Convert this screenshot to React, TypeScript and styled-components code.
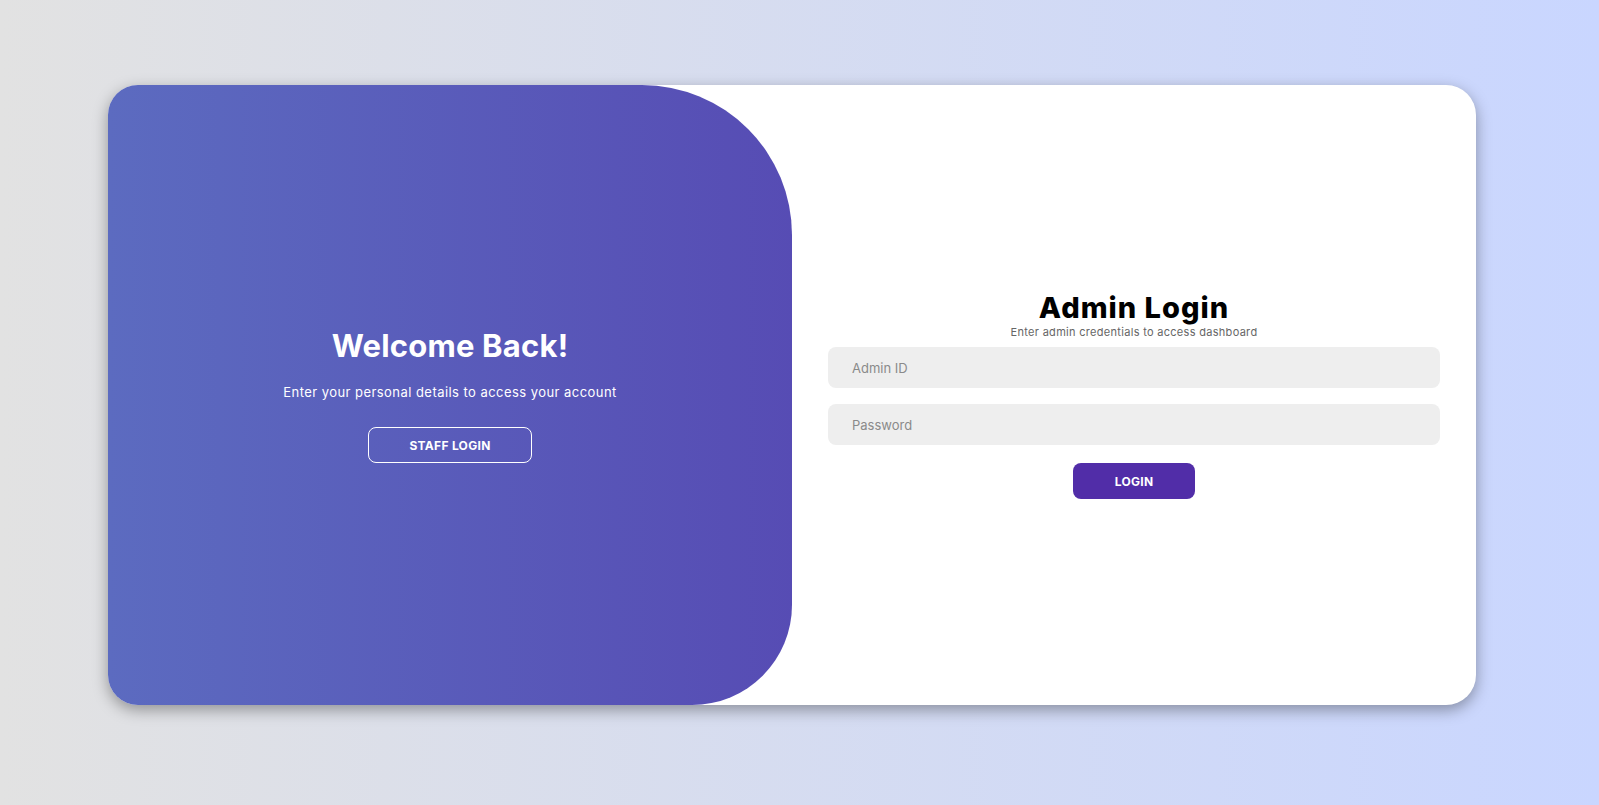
import React from "react";
import styled, { createGlobalStyle } from "styled-components";

const GlobalStyle = createGlobalStyle`
  * {
    box-sizing: border-box;
  }
  html, body {
    margin: 0;
    padding: 0;
  }
  body {
    font-family: Inter, "Open Sans", sans-serif;
    background: linear-gradient(to right, #e2e2e2, #c9d6ff);
  }
`;

const Page = styled.div`
  width: 100%;
  height: 100vh;
  /* the original shot reserved room for scrollbars */
  padding: 0 15px 15px 0;
  display: flex;
  align-items: center;
  justify-content: center;
  background: linear-gradient(to right, #e2e2e2, #c9d6ff);
`;

const Card = styled.div`
  width: 1368px;
  height: 620px;
  background-color: #fff;
  border-radius: 30px;
  box-shadow: 0 5px 15px rgba(0, 0, 0, 0.35);
  overflow: hidden;
  display: grid;
  grid-template-columns: 1fr 1fr;
`;

const TogglePanel = styled.div`
  background: linear-gradient(to right, #5c6bc0, #512da8);
  background-size: 200% 100%;
  background-position: left center;
  border-radius: 0 150px 100px 0;
  color: #fff;
  display: flex;
  flex-direction: column;
  align-items: center;
  justify-content: center;
  text-align: center;
  padding: 0 30px;
`;

const WelcomeTitle = styled.h1`
  margin: 0;
  font-size: 31px;
  line-height: 38px;
  font-weight: 700;
  letter-spacing: 0.2px;
`;

const WelcomeText = styled.p`
  margin: 17px 0 25px;
  font-size: 13px;
  line-height: 20px;
  letter-spacing: 0.45px;
`;

const Button = styled.button<{ $ghost?: boolean }>`
  font-family: inherit;
  font-size: 12px;
  font-weight: 700;
  letter-spacing: 0.3px;
  text-transform: uppercase;
  color: #fff;
  height: 36px;
  padding: 0 ${(p) => (p.$ghost ? 40 : 41)}px;
  border-radius: 8px;
  cursor: pointer;
  background-color: ${(p) => (p.$ghost ? "transparent" : "#512da8")};
  border: 1px solid ${(p) => (p.$ghost ? "#fff" : "transparent")};
`;

const FormSide = styled.div`
  display: flex;
  align-items: center;
  justify-content: center;
  padding: 0 36px;
`;

const Form = styled.form`
  width: 100%;
  display: flex;
  flex-direction: column;
  align-items: center;
`;

const FormTitle = styled.h1`
  margin: 0;
  font-size: 29px;
  font-weight: 800;
  letter-spacing: 1px;
  color: #000;
  line-height: 34px;
`;

const FormHint = styled.span`
  font-size: 11px;
  letter-spacing: 0.3px;
  color: #666;
  line-height: 14px;
`;

const Input = styled.input`
  width: 100%;
  height: 41px;
  margin: 8px 0;
  padding: 0 24px;
  background-color: #eee;
  border: none;
  border-radius: 8px;
  font-family: inherit;
  font-size: 13px;
  outline: none;
  &::placeholder {
    color: #8a8a8a;
  }
`;

const SubmitButton = styled(Button)`
  margin-top: 10px;
`;

export default function App() {
  return (
    <>
      <GlobalStyle />
      <Page>
        <Card>
          <TogglePanel>
            <WelcomeTitle>Welcome Back!</WelcomeTitle>
            <WelcomeText>Enter your personal details to access your account</WelcomeText>
            <Button $ghost type="button">Staff Login</Button>
          </TogglePanel>
          <FormSide>
            <Form onSubmit={(e) => e.preventDefault()}>
              <FormTitle>Admin Login</FormTitle>
              <FormHint>Enter admin credentials to access dashboard</FormHint>
              <Input type="text" placeholder="Admin ID" />
              <Input type="password" placeholder="Password" />
              <SubmitButton type="submit">Login</SubmitButton>
            </Form>
          </FormSide>
        </Card>
      </Page>
    </>
  );
}
